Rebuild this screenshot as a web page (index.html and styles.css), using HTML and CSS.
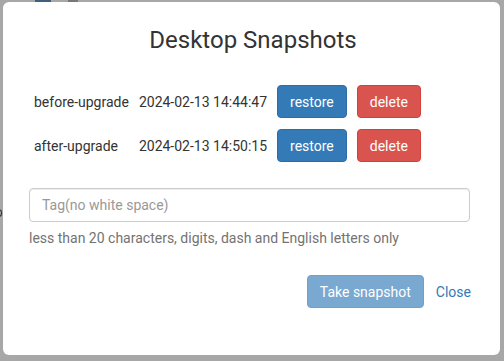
FILE: index.html
```html
<!DOCTYPE html>
<html>
<head>
<meta charset="utf-8">
<link rel="stylesheet" href="styles.css">
</head>
<body>
<div class="behind">
  <span class="bg-icon blue"></span>
  <span class="bg-icon dark"></span>
  <span class="bg-arc"></span>
</div>
<div class="modal">
  <h4 class="title">Desktop Snapshots</h4>
  <div class="snapshots">
    <span class="name">before-upgrade</span>
    <span class="date">2024-02-13 14:44:47</span>
    <button class="btn btn-primary">restore</button>
    <button class="btn btn-danger">delete</button>
    <span class="name">after-upgrade</span>
    <span class="date">2024-02-13 14:50:15</span>
    <button class="btn btn-primary">restore</button>
    <button class="btn btn-danger">delete</button>
  </div>
  <input class="tag-input" type="text" placeholder="Tag(no white space)">
  <p class="help">less than 20 characters, digits, dash and English letters only</p>
  <div class="footer">
    <button class="btn btn-primary disabled">Take snapshot</button>
    <a class="close-link" href="#">Close</a>
  </div>
</div>
</body>
</html>
```
FILE: styles.css
```css
html, body {
  margin: 0;
  padding: 0;
  height: 100%;
}
body {
  background: #a7a7a7;
  font-family: Roboto, "Liberation Sans", sans-serif;
  font-size: 14px;
  color: #333;
  position: relative;
  overflow: hidden;
}
.behind {
  position: absolute;
  inset: 0;
}
.bg-icon {
  position: absolute;
  top: 0;
  height: 2px;
}
.bg-icon.blue { left: 35px; width: 16px; background: #3f5f7f; }
.bg-icon.dark { left: 68px; width: 10px; background: #777; }
.bg-arc {
  position: absolute;
  left: -4px;
  top: 209px;
  width: 6px;
  height: 8px;
  box-sizing: border-box;
  border: 1.5px solid #222;
  border-radius: 50%;
}
.modal {
  position: relative;
  margin: 2px 4px 0 3px;
  height: 353px;
  box-sizing: border-box;
  background: #fff;
  border-radius: 6px;
  padding: 25px 30px 0 26px;
}
.title {
  margin: 0;
  text-align: center;
  font-size: 24px;
  font-weight: 400;
  line-height: 26px;
  color: #333;
  padding-left: 7px;
}
.snapshots {
  margin-top: 32px;
  padding-left: 5px;
  display: grid;
  grid-template-columns: auto auto auto auto;
  justify-content: start;
  align-items: center;
  column-gap: 10px;
  row-gap: 11px;
}
.name, .date {
  color: #333;
  line-height: 20px;
}
.btn {
  font-family: inherit;
  font-size: 14px;
  line-height: 20px;
  padding: 6px 12px;
  border: 1px solid transparent;
  border-radius: 4px;
  color: #fff;
  cursor: pointer;
  height: 33px;
}
.btn-primary {
  background: #337ab7;
  border-color: #2e6da4;
}
.btn-danger {
  background: #d9534f;
  border-color: #d43f3a;
}
.btn.disabled {
  opacity: .65;
}
.tag-input {
  display: block;
  margin-top: 26px;
  width: 100%;
  height: 34px;
  box-sizing: border-box;
  padding: 6px 12px;
  font-family: inherit;
  font-size: 14px;
  border: 1px solid #ccc;
  border-radius: 4px;
  box-shadow: inset 0 1px 1px rgba(0,0,0,.075);
  color: #555;
}
.tag-input::placeholder {
  color: #999;
}
.help {
  margin: 6px 0 0 0;
  color: #737373;
  line-height: 20px;
}
.footer {
  margin-top: 27px;
  margin-right: -1px;
  display: flex;
  justify-content: flex-end;
  align-items: center;
  gap: 12px;
}
.close-link {
  color: #337ab7;
  text-decoration: none;
  line-height: 20px;
}
```
